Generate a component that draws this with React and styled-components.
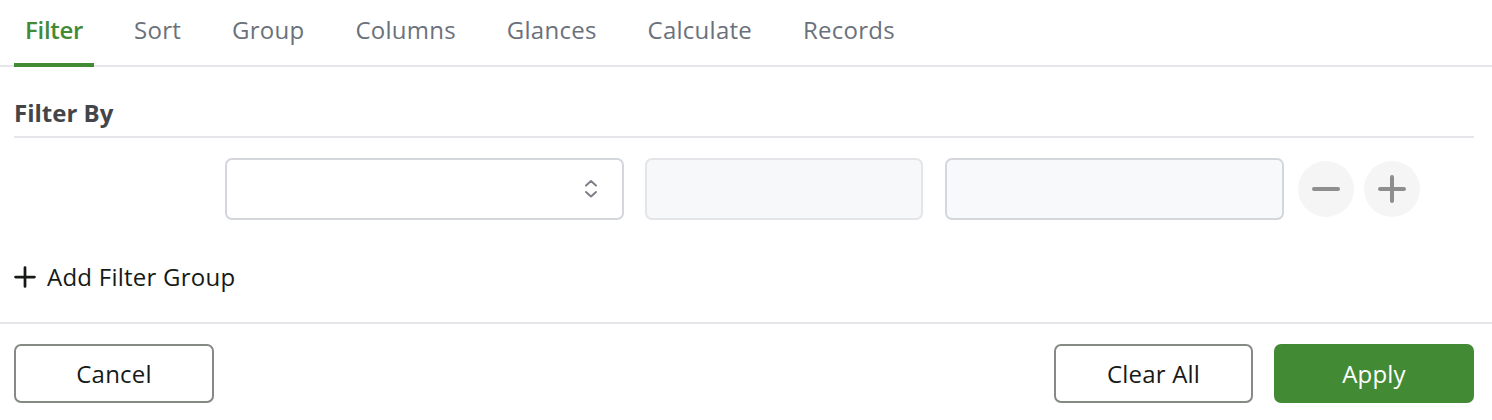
import React from "react";
import styled, { createGlobalStyle } from "styled-components";

const Global = createGlobalStyle`
  html, body { margin: 0; padding: 0; background: #ffffff; }
  body { font-family: "Open Sans", "Liberation Sans", sans-serif; }
  * { box-sizing: border-box; }
`;

const GREEN = "#438a35";

const Page = styled.div`
  width: 1492px;
  display: flex;
  flex-direction: column;
`;

const TabBar = styled.nav`
  display: flex;
  gap: 29px;
  padding-left: 14px;
  border-bottom: 2px solid #e6e6ea;
  height: 67px;
`;

const Tab = styled.div`
  height: 67px;
  margin-bottom: -2px;
  padding: 0 11px 8px;
  display: flex;
  align-items: center;
  font-size: 24px;
  font-weight: ${(p) => (p.$active ? 600 : 400)};
  letter-spacing: ${(p) => (p.$active ? "-0.3px" : "0.25px")};
  color: ${(p) => (p.$active ? GREEN : "#6b717b")};
  box-shadow: ${(p) => (p.$active ? `inset 0 -4px 0 ${GREEN}` : "none")};
  cursor: pointer;
`;

const Body = styled.section`
  padding: 30px 18px 29px 14px;
  border-bottom: 2px solid #e6e6ea;
`;

const Heading = styled.h2`
  margin: 0;
  font-size: 24px;
  line-height: 32px;
  font-weight: 700;
  color: #444548;
  padding-bottom: 7px;
  border-bottom: 2px solid #e6e6ea;
`;

const FilterRow = styled.div`
  display: flex;
  align-items: center;
  margin-top: 20px;
  padding-left: 211px;
`;

const Field = styled.div`
  position: relative;
  width: ${(p) => p.$w}px;
  height: 62px;
  margin-right: ${(p) => p.$gap}px;
  border: 2px solid ${(p) => p.$border};
  border-radius: 7px;
  background: ${(p) => p.$bg};
  display: flex;
  align-items: center;
  justify-content: flex-end;
  padding-right: 24px;
`;

const RoundButton = styled.button`
  width: 56px;
  height: 56px;
  border-radius: 50%;
  border: none;
  background: #f5f5f6;
  display: flex;
  align-items: center;
  justify-content: center;
  padding: 0;
  margin-right: ${(p) => p.$gap || 0}px;
  cursor: pointer;
`;

const AddGroup = styled.button`
  margin-top: 41px;
  display: flex;
  align-items: center;
  gap: 11px;
  border: none;
  background: none;
  padding: 0;
  font-family: inherit;
  font-size: 24px;
  line-height: 32px;
  letter-spacing: 0.25px;
  color: #161a16;
  cursor: pointer;
`;

const Footer = styled.footer`
  display: flex;
  align-items: center;
  padding: 20px 18px 0 14px;
`;

const Spacer = styled.div`
  flex: 1;
`;

const Button = styled.button`
  width: ${(p) => p.$w || 200}px;
  height: 59px;
  margin-left: ${(p) => p.$ml || 0}px;
  border-radius: 7px;
  border: 2px solid ${(p) => (p.$primary ? GREEN : "#858a85")};
  background: ${(p) => (p.$primary ? GREEN : "#ffffff")};
  color: ${(p) => (p.$primary ? "#ffffff" : "#161a16")};
  font-family: inherit;
  font-size: 24px;
  font-weight: 400;
  letter-spacing: 0.2px;
  cursor: pointer;
`;

const Chevrons = () => (
  <svg width="14" height="20" viewBox="0 0 14 20" fill="none">
    <path d="M2 6.5 L7 2 L12 6.5" stroke="#7b8089" strokeWidth="2" strokeLinecap="round" strokeLinejoin="round" />
    <path d="M2 13 L7 17.5 L12 13" stroke="#7b8089" strokeWidth="2" strokeLinecap="round" strokeLinejoin="round" />
  </svg>
);

const Minus = () => (
  <svg width="28" height="28" viewBox="0 0 28 28">
    <path d="M2 14 H26" stroke="#8e8e8e" strokeWidth="4" strokeLinecap="round" />
  </svg>
);

const Plus = ({ color = "#8e8e8e", size = 28, w = 4 }) => (
  <svg width={size} height={size} viewBox="0 0 28 28">
    <path d="M2 14 H26 M14 2 V26" stroke={color} strokeWidth={w} strokeLinecap="round" />
  </svg>
);

const tabs = ["Filter", "Sort", "Group", "Columns", "Glances", "Calculate", "Records"];

export default function App() {
  return (
    <Page>
      <Global />
      <TabBar>
        {tabs.map((t, i) => (
          <Tab key={t} $active={i === 0}>
            {t}
          </Tab>
        ))}
      </TabBar>
      <Body>
        <Heading>Filter By</Heading>
        <FilterRow>
          <Field $w={399} $gap={21} $border="#d3d6db" $bg="#ffffff">
            <Chevrons />
          </Field>
          <Field $w={278} $gap={22} $border="#e3e5e9" $bg="#f7f8fa" />
          <Field $w={339} $gap={14} $border="#d3d6db" $bg="#f8f9fa" />
          <RoundButton $gap={10} aria-label="remove">
            <Minus />
          </RoundButton>
          <RoundButton aria-label="add">
            <Plus />
          </RoundButton>
        </FilterRow>
        <AddGroup>
          <Plus color="#161a16" size={22} w={3.5} />
          Add Filter Group
        </AddGroup>
      </Body>
      <Footer>
        <Button>Cancel</Button>
        <Spacer />
        <Button $w={199}>Clear All</Button>
        <Button $primary $ml={21}>Apply</Button>
      </Footer>
    </Page>
  );
}
